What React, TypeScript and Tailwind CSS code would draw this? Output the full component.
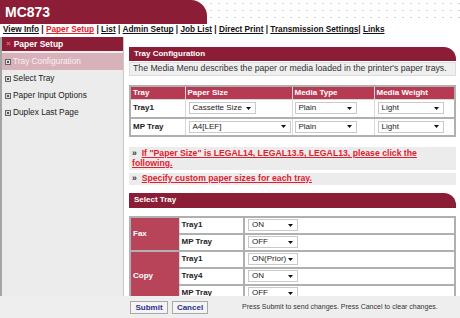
import React from 'react'

const navItems = ['View Info', 'Paper Setup', 'List', 'Admin Setup', 'Job List', 'Direct Print', 'Transmission Settings', 'Links']

function FakeSelect({ value, className }: { value: string; className: string }) {
  return (
    <div className={`flex h-[12px] items-center justify-between border border-[#c9c9c9] bg-white pl-[3px] pr-[4px] text-[8px] text-[#222] ${className}`}>
      <span>{value}</span>
      <svg width="5" height="3" viewBox="0 0 5 3">
        <path d="M0 0h5L2.5 3z" fill="#111" />
      </svg>
    </div>
  )
}

function Bullet() {
  return (
    <span className="mr-[2px] flex h-[6px] w-[6px] items-center justify-center border border-[#666] bg-[#ddd]">
      <span className="h-[2px] w-[2px] bg-[#555]" />
    </span>
  )
}

function Band({ title, className }: { title: string; className?: string }) {
  return (
    <div className={`flex h-[14px] items-center rounded-tr-[12px] bg-[#8b1d36] pl-[5px] text-[8px] font-bold text-white ${className ?? ''}`}>
      {title}
    </div>
  )
}

export default function App() {
  return (
    <div className="flex h-[318px] w-[460px] flex-col overflow-hidden bg-white font-['Liberation_Sans',Arial,sans-serif]">
      <div className="flex h-[24px] shrink-0">
        <div className="flex w-[207px] items-center rounded-tr-[16px] bg-[#8b1d36] pl-[5px] text-[14px] font-bold text-white">
          MC873
        </div>
        <div className="flex-1 bg-[radial-gradient(#d2d2d2_0.7px,transparent_0.8px)] bg-[size:8px_7px]" />
      </div>

      <div className="flex h-[13px] shrink-0 items-center whitespace-pre pl-[3px] text-[8.25px] font-bold text-[#111]">
        {navItems.map((item, i) => (
          <React.Fragment key={item}>
            <span className={`underline ${item === 'Paper Setup' ? 'text-[#e0202c]' : ''}`}>{item}</span>
            {i < navItems.length - 1 && <span>{item === 'Transmission Settings' ? '| ' : ' | '}</span>}
          </React.Fragment>
        ))}
      </div>

      <div className="flex min-h-0 flex-1">
        <div className="w-[123px] shrink-0 border-l-2 border-[#a5a5a5] bg-[#ececec]">
          <div className="flex h-[14px] items-center bg-[#8b1d36] pl-[4px] text-[8.5px] font-bold text-white">
            <span className="mr-[3px] text-[8px] text-[#ff6070]">×</span>
            Paper Setup
          </div>
          <div className="mt-[2px] flex h-[17px] items-center bg-[#d7b2ba] pl-[3px] text-[8.3px] text-[#fbeef0]">
            <Bullet />
            Tray Configuration
          </div>
          {['Select Tray', 'Paper Input Options', 'Duplex Last Page'].map(t => (
            <div key={t} className="flex h-[17px] items-center pl-[3px] text-[8.3px] text-[#222]">
              <Bullet />
              {t}
            </div>
          ))}
        </div>

        <div className="min-w-0 flex-1 overflow-hidden border-l border-[#c8c8c8] pl-[5px] pr-[4px] pt-[10px]">
          <Band title="Tray Configuration" />
          <div className="mt-[1px] flex h-[14px] items-center border border-[#dcdcdc] bg-[#efefef] pl-[3px] text-[8.7px] text-[#333]">
            The Media Menu describes the paper or media loaded in the printer's paper trays.
          </div>

          <table className="mt-[9px] w-full border-collapse border-2 border-[#b0b0b0] text-[8px]">
            <thead>
              <tr className="h-[12px] bg-[#b63a52] text-left font-bold text-white">
                <th className="w-[55px] border border-[#d8d8d8] pl-[2px]">Tray</th>
                <th className="w-[107px] border border-[#d8d8d8] pl-[2px]">Paper Size</th>
                <th className="w-[82px] border border-[#d8d8d8] pl-[2px]">Media Type</th>
                <th className="border border-[#d8d8d8] pl-[2px]">Media Weight</th>
              </tr>
            </thead>
            <tbody>
              <tr className="h-[18px] border-b-2 border-[#b0b0b0]">
                <td className="border-r border-[#d8d8d8] pl-[2px] font-bold text-[#222]">Tray1</td>
                <td className="border-r border-[#d8d8d8] pl-[3px]"><FakeSelect value="Cassette Size" className="w-[67px]" /></td>
                <td className="border-r border-[#d8d8d8] pl-[2px]"><FakeSelect value="Plain" className="w-[62px]" /></td>
                <td className="pl-[3px]"><FakeSelect value="Light" className="w-[66px]" /></td>
              </tr>
              <tr className="h-[18px]">
                <td className="border-r border-[#d8d8d8] pl-[2px] font-bold text-[#222]">MP Tray</td>
                <td className="border-r border-[#d8d8d8] pl-[3px]"><FakeSelect value="A4[LEF]" className="w-[102px]" /></td>
                <td className="border-r border-[#d8d8d8] pl-[2px]"><FakeSelect value="Plain" className="w-[62px]" /></td>
                <td className="pl-[3px]"><FakeSelect value="Light" className="w-[66px]" /></td>
              </tr>
            </tbody>
          </table>

          <div className="mt-[10px] bg-[#ececec] px-[3px] py-[1.5px] text-[8.7px] font-bold leading-[10px] text-[#333]">
            {'»\u00a0\u00a0'}
            <a className="text-[#e0202c] underline">If "Paper Size" is LEGAL14, LEGAL13.5, LEGAL13, please click the following.</a>
          </div>
          <div className="mt-[3px] flex h-[12px] items-center bg-[#ececec] px-[3px] text-[8.7px] font-bold text-[#333]">
            {'»\u00a0\u00a0'}
            <a className="text-[#e0202c] underline">Specify custom paper sizes for each tray.</a>
          </div>

          <Band title="Select Tray" className="mt-[8px] h-[15px]" />

          <table className="mt-[8px] w-full border-collapse border-2 border-[#b0b0b0] text-[8px]">
            <tbody>
              {[
                ['Fax', 'Tray1', 'ON', 2],
                ['', 'MP Tray', 'OFF', 0],
                ['Copy', 'Tray1', 'ON(Prior)', 3],
                ['', 'Tray4', 'ON', 0],
                ['', 'MP Tray', 'OFF', 0],
              ].map(([group, tray, val, span], i) => (
                <tr key={i} className="h-[17px] border-b-2 border-[#b0b0b0]">
                  {group && (
                    <td rowSpan={span as number} className="w-[49px] border-r border-[#d8d8d8] bg-[#b8445a] pl-[2px] font-bold text-white">
                      {group}
                    </td>
                  )}
                  <td className="w-[65px] border-r-2 border-[#b0b0b0] pl-[2px] font-bold text-[#222]">{tray}</td>
                  <td className="pl-[3px]"><FakeSelect value={val as string} className="w-[50px]" /></td>
                </tr>
              ))}
            </tbody>
          </table>
        </div>
      </div>

      <div className="flex h-[22px] shrink-0 items-center bg-[#eeeeee] pl-[130px]">
        <button className="h-[13px] w-[38px] border border-[#a8a8a8] bg-[#f4f4f4] text-[8px] font-bold text-[#2e2e8c]">Submit</button>
        <button className="ml-[4px] h-[13px] w-[36px] border border-[#a8a8a8] bg-[#f4f4f4] text-[8px] font-bold text-[#2e2e8c]">Cancel</button>
        <span className="ml-[34px] text-[7px] text-[#333]">Press Submit to send changes. Press Cancel to clear changes.</span>
      </div>
    </div>
  )
}
